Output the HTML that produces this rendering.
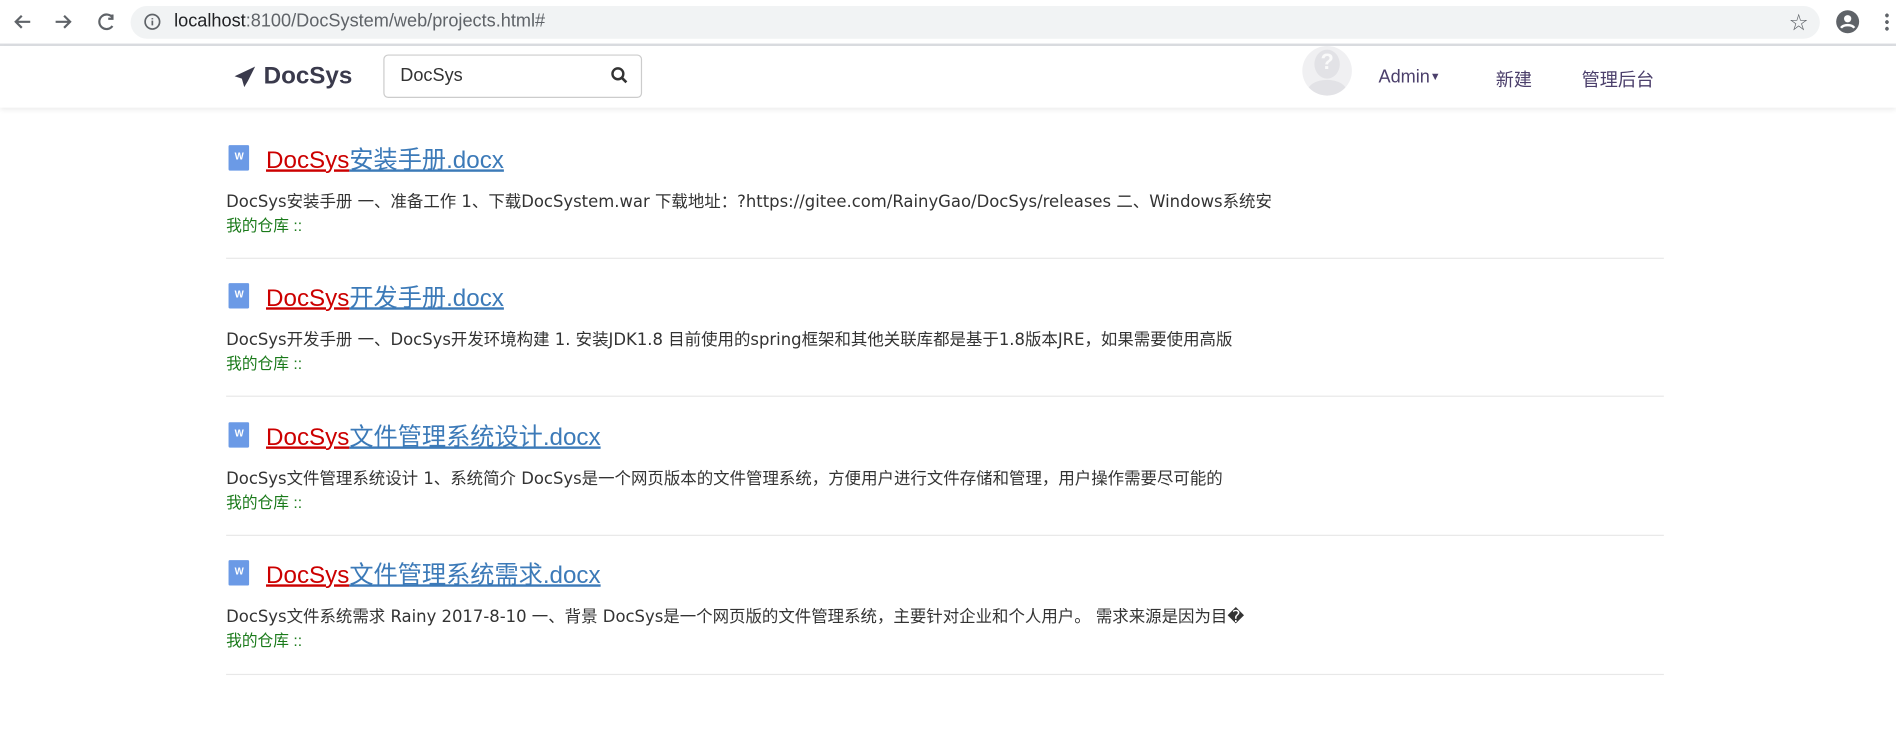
<!DOCTYPE html>
<html><head><meta charset="utf-8"><style>
html,body{margin:0;padding:0;background:#fff;overflow:hidden;width:1896px;height:738px}
#w{position:absolute;left:0;top:0;width:1568px;height:610px;transform:scale(1.2092,1.2098);transform-origin:0 0;font-family:"Liberation Sans","Noto Sans CJK SC",sans-serif}
.a{position:absolute}
.url{left:108px;top:5px;width:1397px;height:27px;background:#f1f3f4;border-radius:14px}
.nav{left:0;top:38px;width:1568px;height:51px;background:#fff;box-shadow:0 2px 4px rgba(0,0,0,.08)}
.t{font-size:20px;line-height:24px;white-space:nowrap}
.t .r{color:#c00;text-decoration:underline}
.t .b{color:#3c7ab8;text-decoration:underline}
.d{font-size:13.6px;color:#333;white-space:nowrap;font-family:"DejaVu Sans","Noto Sans CJK SC",sans-serif}
.g{font-size:13px;color:#1a7a1a;white-space:nowrap}
.sep{left:187px;width:1189px;height:1px;background:#e8e8e8}
.ic{width:17px;height:21px;background:#6b9ae6;border-radius:1px}
.ic:after{content:"W";position:absolute;left:5px;top:5px;font-size:8px;color:#fff;font-weight:bold}
.n{font-size:15px;color:#4b3f6b;white-space:nowrap}
</style></head><body><div id="w">
<div class="a" style="left:0;top:0;width:1568px;height:36px;background:#fff"></div>
<svg class="a" style="left:10px;top:9px" width="90" height="18" viewBox="0 0 90 18" fill="none" stroke="#5f6368" stroke-width="1.8"><path d="M15 9H3M8 4L3 9l5 5"/><path d="M36 9h12M43 4l5 5-5 5"/><path d="M83 5.5A6 6 0 1 0 83 12.5M83 3v3.5h-3.5"/></svg>
<div class="a url"></div>
<svg class="a" style="left:119px;top:11px" width="14" height="14" viewBox="0 0 14 14"><circle cx="7" cy="7" r="6" fill="none" stroke="#5f6368" stroke-width="1.4"/><path d="M7 6v4M7 4v1" stroke="#5f6368" stroke-width="1.4"/></svg>
<div class="a" style="left:144px;top:9px;font-size:15px;color:#202124;white-space:nowrap">localhost<span style="color:#5f6368">:8100/DocSystem/web/projects.html#</span></div>
<div class="a" style="left:1480px;top:8px;font-size:15px;color:#5f6368">☆</div>
<svg class="a" style="left:1518px;top:8px" width="20" height="20" viewBox="0 0 20 20"><circle cx="10" cy="10" r="9.5" fill="#5f6368"/><circle cx="10" cy="7.5" r="3" fill="#fff"/><path d="M4.5 15c2-3 9-3 11 0" stroke="#fff" stroke-width="2" fill="none"/></svg>
<div class="a" style="left:1559px;top:10px;width:3px;height:16px;background:radial-gradient(circle,#5f6368 1.5px,transparent 1.6px) 0 0/3px 5.5px"></div>
<div class="a" style="left:0;top:36px;width:1568px;height:2px;background:#dadce0"></div>
<div class="a nav"></div>
<svg class="a" style="left:193px;top:54px" width="19" height="19" viewBox="0 0 19 19"><path d="M18 1L1 9l6 2 2 7 3-5 6-12z" fill="#3a3a4c"/></svg>
<div class="a" style="left:218px;top:52px;font-size:20px;font-weight:bold;color:#3a3a4c">DocSys</div>
<div class="a" style="left:317px;top:45px;width:212px;height:34px;border:1px solid #ccc;border-radius:4px"></div>
<div class="a" style="left:331px;top:54px;font-size:15px;color:#333">DocSys</div>
<svg class="a" style="left:505px;top:55px" width="15" height="15" viewBox="0 0 15 15"><circle cx="6" cy="6" r="4.5" fill="none" stroke="#333" stroke-width="2"/><path d="M9.5 9.5L13 13" stroke="#333" stroke-width="2.2"/></svg>
<div class="a" style="left:1077px;top:38px;width:41px;height:41px;border-radius:50%;background:#f0f0f2;overflow:hidden">
 <div class="a" style="left:10px;top:3px;width:21px;height:24px;border-radius:50%;background:#e2e2e6"></div>
 <div class="a" style="left:4px;top:28px;width:33px;height:20px;border-radius:50%;background:#e2e2e6"></div>
 <div class="a" style="left:15px;top:3px;font-size:18px;color:#fafafa;font-weight:bold">?</div>
</div>
<div class="a n" style="left:1140px;top:55px">Admin<span style="font-size:9px;vertical-align:2px">▼</span></div>
<div class="a n" style="left:1237px;top:55px">新建</div>
<div class="a n" style="left:1308px;top:55px">管理后台</div>

<div class="a ic" style="left:189px;top:120px"></div>
<div class="a t" style="left:220px;top:121px"><span class="r">DocSys</span><span class="b">安装手册.docx</span></div>
<div class="a d" style="left:187px;top:155px">DocSys安装手册 一、准备工作 1、下载DocSystem.war 下载地址：?https://gitee.com/RainyGao/DocSys/releases 二、Windows系统安</div>
<div class="a g" style="left:187px;top:176px">我的仓库 ::</div>
<div class="a sep" style="top:213px"></div>

<div class="a ic" style="left:189px;top:234px"></div>
<div class="a t" style="left:220px;top:235px"><span class="r">DocSys</span><span class="b">开发手册.docx</span></div>
<div class="a d" style="left:187px;top:269px">DocSys开发手册 一、DocSys开发环境构建 1. 安装JDK1.8 目前使用的spring框架和其他关联库都是基于1.8版本JRE，如果需要使用高版</div>
<div class="a g" style="left:187px;top:290px">我的仓库 ::</div>
<div class="a sep" style="top:327px"></div>

<div class="a ic" style="left:189px;top:349px"></div>
<div class="a t" style="left:220px;top:350px"><span class="r">DocSys</span><span class="b">文件管理系统设计.docx</span></div>
<div class="a d" style="left:187px;top:384px">DocSys文件管理系统设计 1、系统简介 DocSys是一个网页版本的文件管理系统，方便用户进行文件存储和管理，用户操作需要尽可能的</div>
<div class="a g" style="left:187px;top:405px">我的仓库 ::</div>
<div class="a sep" style="top:442px"></div>

<div class="a ic" style="left:189px;top:463px"></div>
<div class="a t" style="left:220px;top:464px"><span class="r">DocSys</span><span class="b">文件管理系统需求.docx</span></div>
<div class="a d" style="left:187px;top:498px">DocSys文件系统需求 Rainy 2017-8-10 一、背景 DocSys是一个网页版的文件管理系统，主要针对企业和个人用户。 需求来源是因为目�</div>
<div class="a g" style="left:187px;top:519px">我的仓库 ::</div>
<div class="a sep" style="top:557px"></div>
</div></body></html>
